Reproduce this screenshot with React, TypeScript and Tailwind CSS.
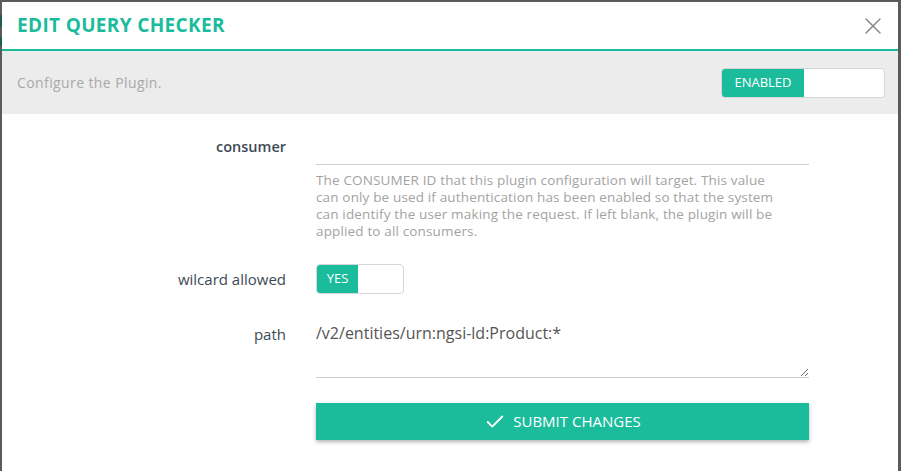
import { Check, X } from "lucide-react";

const font = { fontFamily: "'Open Sans', 'Liberation Sans', sans-serif" };

function Toggle({ label, on, width, onWidth }: { label: string; on: boolean; width: string; onWidth: string }) {
	return (
		<div className={`flex h-[30px] ${width} overflow-hidden rounded-[4px] border border-[#d6d6d6] bg-white`}>
			{on && (
				<div className={`flex ${onWidth} items-center justify-center bg-[#1abc9c] text-[13px] text-white`}>
					{label}
				</div>
			)}
		</div>
	);
}

export default function App() {
	return (
		<div className="flex h-[471px] w-[901px] bg-[#5b5b5b] pt-[2px] pr-[3px]" style={font}>
			<div className="flex w-[2px] flex-col">
				<div className="h-[13px]" />
				<div className="h-[12px] bg-[#1f5e52]" />
				<div className="h-[10px]" />
				<div className="h-[9px] bg-[#1f5e52]" />
			</div>
			<div className="flex flex-1 flex-col bg-white">
				{/* header */}
				<div className="flex h-[49px] items-center justify-between border-b-2 border-[#1abc9c] pl-[15px] pr-[11px]">
					<h1 className="text-[19px] font-bold tracking-[0.35px] text-[#1abc9c]">EDIT QUERY CHECKER</h1>
					<X className="h-[28px] w-[28px] text-[#8a8a8a]" strokeWidth={1.3} />
				</div>

				{/* plugin band */}
				<div className="flex h-[63px] items-center justify-between bg-[#ececec] pl-[15px] pr-[13px]">
					<span className="text-[14px] tracking-[0.4px] text-[#a9a9a9]">Configure the Plugin.</span>
					<Toggle label="ENABLED" on width="w-[164px]" onWidth="w-[82px]" />
				</div>

				{/* form */}
				<div className="flex flex-col pl-[15px] pt-[21px]">
					<div className="flex gap-[30px]">
						<label className="w-[269px] pt-[1px] text-right text-[14.5px] font-semibold text-[#3c4a56]">consumer</label>
						<div className="flex w-[493px] flex-col">
							<div className="h-[30px] border-b border-[#cfcfcf]" />
							<p className="mt-[7px] whitespace-nowrap text-[13.5px] leading-[17px] tracking-[0.15px] text-[#a3a3a3]">
								<span className="block">The CONSUMER ID that this plugin configuration will target. This value</span>
								<span className="block">can only be used if authentication has been enabled so that the system</span>
								<span className="block">can identify the user making the request. If left blank, the plugin will be</span>
								<span className="block">applied to all consumers.</span>
							</p>
						</div>
					</div>

					<div className="mt-[24px] flex items-center gap-[30px]">
						<label className="w-[269px] text-right text-[15px] text-[#3c4a56]">wilcard allowed</label>
						<Toggle label="YES" on width="w-[88px]" onWidth="w-[41px]" />
					</div>

					<div className="mt-[28px] flex gap-[30px]">
						<label className="w-[269px] pt-[1px] text-right text-[15px] text-[#3c4a56]">path</label>
						<textarea
							readOnly
							value="/v2/entities/urn:ngsi-ld:Product:*"
							className="h-[56px] w-[493px] border-b border-[#cfcfcf] text-[16px] leading-[22px] text-[#555] outline-none"
						/>
					</div>

					<div className="mt-[25px] flex gap-[30px]">
						<div className="w-[269px]" />
						<button className="flex h-[37px] w-[493px] items-center justify-center gap-[7px] bg-[#1abc9c] text-[15px] text-white shadow-[0_2px_4px_rgba(0,0,0,0.3)]">
							<Check className="h-[22px] w-[22px]" strokeWidth={2} />
							SUBMIT CHANGES
						</button>
					</div>
				</div>
			</div>
		</div>
	);
}
